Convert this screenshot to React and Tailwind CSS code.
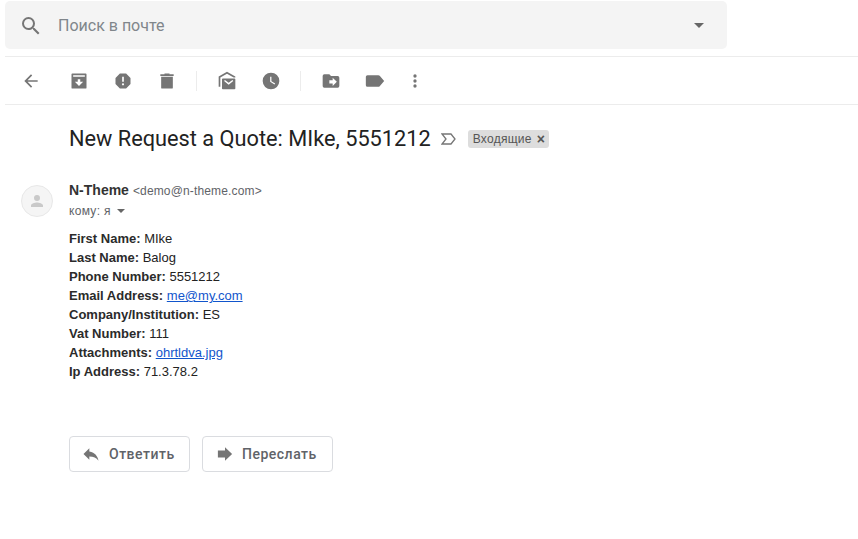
import React from 'react';

const Icon = ({ d, className = "w-5 h-5", vb = "0 0 24 24" }) => (
  <svg viewBox={vb} className={className} fill="#757575">
    <path d={d} />
  </svg>
);

const toolbarIcons = {
  back: "M20 11H7.83l5.59-5.59L12 4l-8 8 8 8 1.41-1.41L7.83 13H20v-2z",
  archive: "M20 3H4a1 1 0 0 0-1 1v16a1 1 0 0 0 1 1h16a1 1 0 0 0 1-1V4a1 1 0 0 0-1-1zM5 5h14v2H5V5zm7 13l-5-5h3.5v-3h3v3H17l-5 5z",
  spam: "M15.73 3H8.27L3 8.27v7.46L8.27 21h7.46L21 15.73V8.27L15.73 3zM12 17.3a1.3 1.3 0 1 1 0-2.6 1.3 1.3 0 0 1 0 2.6zm1-4.3h-2V7h2v6z",
  trash: "M15 4V3H9v1H4v2h16V4h-5zM5 7v13a1 1 0 0 0 1 1h12a1 1 0 0 0 1-1V7H5z",
  unread: "M12 1L2 6.5V19h2V7.7L12 3.3l8 4.4H22V6.5L12 1zM6 9v12a1 1 0 0 0 1 1h14a1 1 0 0 0 1-1V10a1 1 0 0 0-1-1H7a1 1 0 0 0-1 1zm8 7.5L8.5 12l1-1.3 4.5 3.3 4.5-3.3 1 1.3-5.500 4.500z",
  clock: "M12 2a10 10 0 1 0 0 20 10 10 0 0 0 0-20zm4.2 14.2L11 13V7h1.500v5.200l4.500 2.700-.8 1.300z",
  move: "M20 6h-8l-2-2H4a2 2 0 0 0-2 2v12a2 2 0 0 0 2 2h16a2 2 0 0 0 2-2V8a2 2 0 0 0-2-2zm-6 12v-3h-4v-4h4V8l5 5-5 5z",
  label: "M17.63 5.84A2 2 0 0 0 16 5H3a2 2 0 0 0-2 2v10a2 2 0 0 0 2 2h13c.67 0 1.27-.33 1.630-.84L23 12l-5.370-6.160z",
  more: "M12 8a2 2 0 1 0 0-4 2 2 0 0 0 0 4zm0 2a2 2 0 1 0 0 4 2 2 0 0 0 0-4zm0 6a2 2 0 1 0 0 4 2 2 0 0 0 0-4z",
};

const ToolButton = ({ d, className = "w-[44px]" }) => (
  <div className={`${className} h-6 flex items-center justify-center shrink-0`}>
    <Icon d={d} />
  </div>
);

const fields = [
  ["First Name:", "MIke"],
  ["Last Name:", "Balog"],
  ["Phone Number:", "5551212"],
  ["Email Address:", "me@my.com", true],
  ["Company/Institution:", "ES"],
  ["Vat Number:", "111"],
  ["Attachments:", "ohrtldva.jpg", true],
  ["Ip Address:", "71.3.78.2"],
];

const App = () => {
  return (
    <div className="w-[858px] h-[539px] bg-white overflow-hidden font-['Roboto',sans-serif]">
      <div className="pt-px pl-[5px]">
        <div className="w-[722px] h-12 bg-[#f4f4f4] rounded-[5px] flex items-center pl-[14px] pr-[23px] pt-[2px]">
          <svg viewBox="0 0 24 24" className="w-6 h-6 shrink-0" fill="#757575">
            <path d="M15.500 14h-.79l-.28-.27A6.470 6.470 0 0 0 16 9.500 6.500 6.500 0 1 0 9.500 16c1.610 0 3.090-.59 4.230-1.570l.27.28v.79l5 4.990L20.490 19l-4.990-5zm-6 0C7.010 14 5 11.990 5 9.500S7.010 5 9.500 5 14 7.010 14 9.500 11.990 14 9.500 14z" />
          </svg>
          <span className="ml-[15px] text-[16px] text-[#80868b] flex-1">Поиск в почте</span>
          <div className="w-0 h-0 -mt-[2px] border-x-[5px] border-x-transparent border-t-[5px] border-t-[#666]" />
        </div>
      </div>

      <div className="ml-[5px] mt-[7px] h-[47px] border-y border-[#ececec] box-content flex items-center">
        <ToolButton d={toolbarIcons.back} className="w-[52px]" />
        <ToolButton d={toolbarIcons.archive} />
        <ToolButton d={toolbarIcons.spam} />
        <ToolButton d={toolbarIcons.trash} />
        <div className="w-px h-5 bg-[#ececec] mx-[7px]" />
        <ToolButton d={toolbarIcons.unread} className="w-[44px] ml-[1px]" />
        <ToolButton d={toolbarIcons.clock} />
        <div className="w-px h-5 bg-[#ececec] mx-[7px]" />
        <ToolButton d={toolbarIcons.move} className="w-[44px] ml-[1px]" />
        <ToolButton d={toolbarIcons.label} />
        <ToolButton d={toolbarIcons.more} className="w-[36px]" />
      </div>

      <div className="pl-[69px] pt-[20px] flex items-center h-[28px] box-content">
        <h1 className="text-[21.75px] leading-7 text-[#222] font-normal">New Request a Quote: MIke, 5551212</h1>
        <svg viewBox="0 0 16 12" className="w-4 h-3 ml-[10px] mr-[11px]" fill="none" stroke="#757575" strokeWidth="1.300">
          <path d="M1 1h9l4 5-4 5H1l4-5-4-5z" />
        </svg>
        <span className="h-[18px] bg-[#dddddd] rounded-[3px] flex items-center pl-[5px] pr-[4px] text-[12px] tracking-[0.25px] text-[#555] font-['Liberation_Sans',sans-serif]">
          Входящие
          <span className="ml-[5px] text-[14px] leading-none font-bold text-[#555]">×</span>
        </span>
      </div>

      <div className="pl-[21px] pt-[27px] flex">
        <div className="w-8 h-8 mt-[5px] rounded-full bg-[#f5f5f5] border border-[#e8e8e8] flex items-center justify-center shrink-0">
          <svg viewBox="0 0 24 24" className="w-[18px] h-[18px]" fill="#c9c9c9">
            <path d="M12 12a4 4 0 1 0 0-8 4 4 0 0 0 0 8zm0 2c-2.700 0-8 1.340-8 4v2h16v-2c0-2.660-5.300-4-8-4z" />
          </svg>
        </div>
        <div className="ml-4 font-['Liberation_Sans',sans-serif]">
          <div className="h-[20px] flex items-baseline">
            <span className="text-[14px] font-bold text-[#333]">N-Theme</span>
            <span className="ml-1 text-[12px] tracking-[0.15px] text-[#5f6368]">&lt;demo@n-theme.com&gt;</span>
          </div>
          <div className="mt-[3px] flex items-center text-[12px] tracking-[0.3px] text-[#5f6368] h-4">
            кому: я
            <div className="ml-[6px] w-0 h-0 border-x-[4px] border-x-transparent border-t-[4px] border-t-[#666]" />
          </div>
          <div className="mt-[10px] text-[13px] leading-[19px] text-[#222]">
            {fields.map(([label, value, link]) => (
              <div key={label}>
                <b className="text-[#2b2b2b]">{label}</b>{" "}
                {link ? <a className="text-[#1155cc] underline">{value}</a> : value}
              </div>
            ))}
          </div>
        </div>
      </div>

      <div className="pl-[69px] pt-[55px] flex gap-3 text-[14px] font-medium text-[#5f6368] tracking-[0.5px]">
        <button className="w-[121px] h-9 border border-[#dadce0] rounded flex items-center pl-[11px]">
          <svg viewBox="0 0 24 24" className="w-5 h-5 shrink-0" fill="#757575">
            <path d="M10 9V5l-7 7 7 7v-4.100c5 0 8.500 1.600 11 5.100-1-5-4-10-11-11z" />
          </svg>
          <span className="ml-[8px]">Ответить</span>
        </button>
        <button className="w-[131px] h-9 border border-[#dadce0] rounded flex items-center pl-[14px]">
          <svg viewBox="0 0 18 18" className="w-4 h-4 shrink-0" fill="#757575">
            <path d="M1 5h8V1.500L17 9l-8 7.500V13H1V5z" />
          </svg>
          <span className="ml-[9px]">Переслать</span>
        </button>
      </div>
    </div>
  );
};

export default App;
